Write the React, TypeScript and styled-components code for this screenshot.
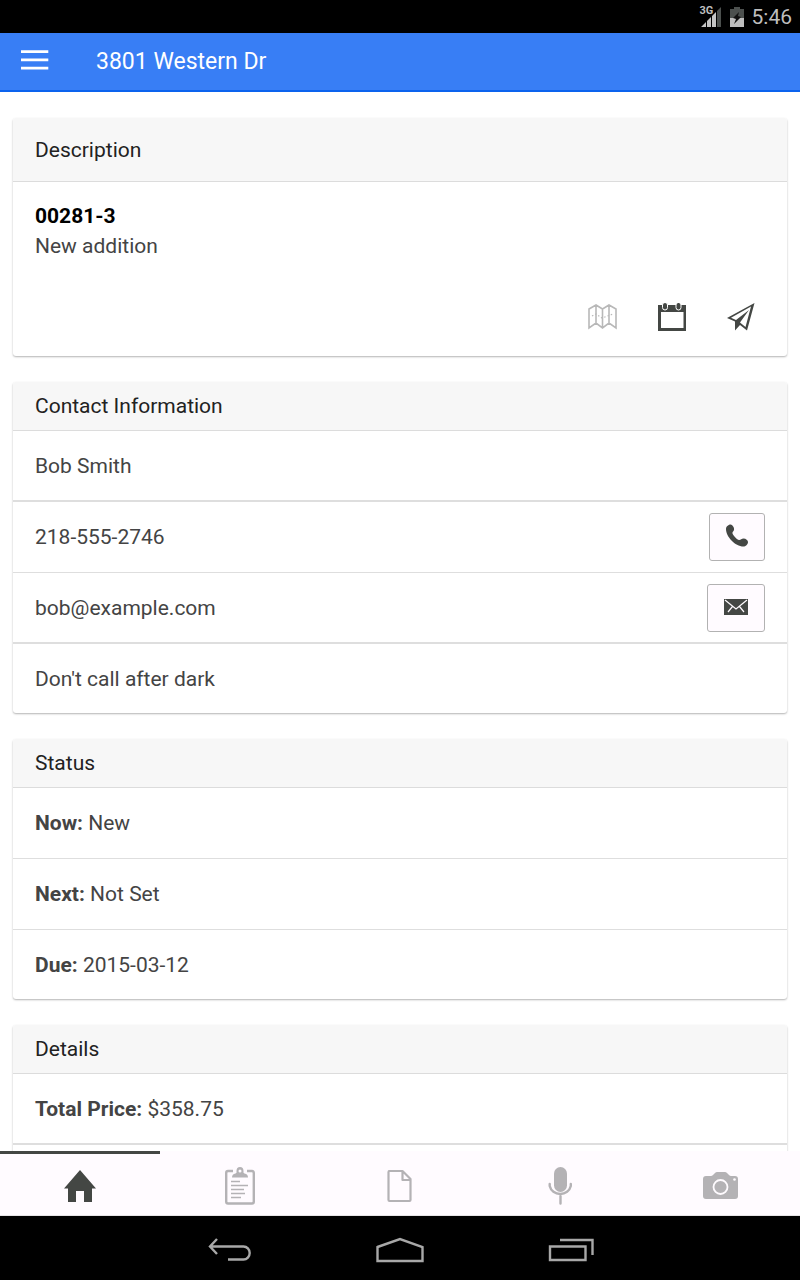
import React from "react";
import styled, { createGlobalStyle } from "styled-components";

const GlobalStyle = createGlobalStyle`
  * { box-sizing: border-box; }
  body { margin: 0; background: #fff; font-family: Roboto, "Noto Sans", sans-serif; }
`;

const Screen = styled.div`
  display: flex;
  flex-direction: column;
  height: 100vh;
  background: #fff;
  color: #444;
  font-size: 21px;
  line-height: 30px;
`;

const StatusBar = styled.div`
  display: flex;
  flex: none;
  align-items: center;
  justify-content: flex-end;
  gap: 8px;
  height: 33px;
  padding: 1px 8px 0;
  background: #000;
  color: #bebebe;
`;

const Signal = styled.span`
  position: relative;
  display: flex;
`;

const NetworkType = styled.span`
  position: absolute;
  top: -2px;
  left: -1px;
  font-size: 11px;
  font-weight: 700;
  line-height: 12px;
`;

const TitleBar = styled.header`
  display: flex;
  flex: none;
  align-items: center;
  gap: 46px;
  height: 59px;
  padding: 1px 20px 0;
  border-bottom: 2px solid #0c63ee;
  background: #387ef5;
  color: #fff;
`;

const PlainButton = styled.button<{ $muted?: boolean }>`
  display: flex;
  padding: 0;
  border: 0;
  background: none;
  color: ${(p) => (p.$muted ? "#b8b8b8" : "#444744")};
  cursor: pointer;
`;

const MenuButton = styled(PlainButton)`
  color: #fff;
`;

const Title = styled.h1`
  margin: 0;
  font-size: 23px;
  font-weight: 400;
`;

const Content = styled.main`
  display: flex;
  flex: 1;
  flex-direction: column;
  gap: 26px;
  min-height: 0;
  padding: 26px 13px;
  overflow-y: auto;
  scrollbar-width: none;
`;

const Card = styled.section`
  flex: none;
  overflow: hidden;
  border-radius: 3px;
  background: #fff;
  box-shadow: 0 1px 2px rgba(0, 0, 0, 0.3);
`;

const CardTitle = styled.h2<{ $tall?: boolean }>`
  margin: 0;
  padding: ${(p) => (p.$tall ? "17px 22px 16px" : "9px 22px")};
  border-bottom: 1px solid #dcdcdc;
  background: #f7f7f7;
  color: #222;
  font-size: 21px;
  font-weight: 400;
`;

const Summary = styled.div`
  padding: 19px 22px 0;
`;

const JobNumber = styled.strong`
  display: block;
  color: #000;
`;

const Actions = styled.div`
  display: flex;
  align-items: center;
  justify-content: flex-end;
  gap: 41px;
  padding: 42px 10px 25px;
`;

const Rows = styled.ul`
  margin: 0;
  padding: 0;
  list-style: none;
`;

const Row = styled.li<{ $strong?: boolean }>`
  display: flex;
  align-items: center;
  justify-content: space-between;
  min-height: 71px;
  padding: 0 22px;
  border-bottom: ${(p) => (p.$strong ? 2 : 1)}px solid #dedede;

  &:last-child {
    min-height: 69px;
    border-bottom: 0;
  }
`;

const ContactButton = styled.button`
  display: flex;
  align-items: center;
  padding: 10px 16px 12px;
  border: 1px solid #b2b2b2;
  border-radius: 3px;
  background: #fffbff;
  color: #444744;
  cursor: pointer;
`;

const TabBar = styled.nav`
  display: flex;
  flex: none;
  height: 65px;
  border-bottom: 1px solid #e6e4e6;
  background: #fffbff;
`;

const Tab = styled.a<{ $active?: boolean }>`
  display: flex;
  flex: 1;
  align-items: center;
  justify-content: center;
  padding-top: 3px;
  border-top: 3px solid ${(p) => (p.$active ? "#444744" : "transparent")};
  color: ${(p) => (p.$active ? "#444744" : "#b4b2b5")};
`;

const SystemBar = styled.div`
  display: flex;
  flex: none;
  align-items: center;
  justify-content: center;
  gap: 124px;
  height: 64px;
  padding: 4px 0 0 2px;
  background: #000;
`;

const SystemButton = styled(PlainButton)`
  color: #a8a8a8;
`;

const SignalIcon = () => (
  <svg width="21" height="20" viewBox="0 0 21 20" aria-hidden="true">
    <path d="M0 20 5 15V20ZM6 14 10 10V20H6ZM11 9 15 5V20H11Z" fill="#c4c4c4" />
    <path d="M16 4 20 0V20H16Z" fill="#4c504e" />
  </svg>
);

const BatteryIcon = () => (
  <svg width="14" height="20" viewBox="0 0 14 20" aria-hidden="true">
    <path d="M4 0H10V2H14V11H0V2H4Z" fill="#4c504e" />
    <path d="M0 11H14V20H0Z" fill="#bebebe" />
    <path d="M9 5 3 11 6 12 4 17 11 10 8 9Z" fill="#111" />
  </svg>
);

const MenuIcon = () => (
  <svg width="30" height="24" viewBox="0 0 30 24" fill="currentColor" aria-hidden="true">
    <path d="M1 .3H28.300V3H1ZM1 8.500H28.300V11.200H1ZM1 16.800H28.300V19.500H1Z" />
  </svg>
);

const MapIcon = () => (
  <svg width="29" height="28" viewBox="0 0 29 28" fill="none" stroke="currentColor" aria-hidden="true">
    <path d="M1 6 8 2 14.500 6 21 2 28 6V25L21 20 14.500 25 8 20 1 25ZM8 2V20M14.500 6V25M21 2V20" strokeWidth="1.600" />
    <path d="M4 13 8 11 14 15 25 11" strokeWidth="1.200" strokeDasharray="1.500 2" />
  </svg>
);

const CalendarIcon = () => (
  <svg width="28" height="28" viewBox="0 0 28 28" aria-hidden="true">
    <path d="M0 2H28V28H0ZM3 9V25H25.500V9Z" fill="currentColor" fillRule="evenodd" />
    <rect x="4.500" y="-.5" width="5" height="7.500" rx="2.500" fill="currentColor" stroke="#fff" />
    <rect x="18" y="-.5" width="5" height="7.500" rx="2.500" fill="currentColor" stroke="#fff" />
  </svg>
);

const PlaneIcon = () => (
  <svg width="28" height="28" viewBox="0 0 28 28" aria-hidden="true">
    <path
      d="M27.500 0 0 15 8 18.500V27.500L13 22 20 27.500ZM24 3.500 18.500 24 13 19.500 22 7 9 17 4 14.800Z"
      fill="currentColor"
      fillRule="evenodd"
    />
  </svg>
);

const PhoneIcon = () => (
  <svg width="22" height="24" viewBox="1 0 22 24" fill="currentColor" aria-hidden="true">
    <path d="M1 5C1 2 4 .5 5.500 .5 8 1 9.500 4 9 6 8.500 7.500 7 8 7.500 9.500 8.500 12 12 15.500 14 16 15.500 16.300 16.500 14.500 18.500 14.500 21 14.500 23 16.500 23 18 23 20.500 20.500 22.500 18.500 22.500 10 22.500 1 12.500 1 5Z" />
  </svg>
);

const MailIcon = () => (
  <svg width="24" height="24" viewBox="0 0 24 24" aria-hidden="true">
    <path d="M0 4H24V20H0Z" fill="currentColor" />
    <path d="M1 5 12 14 23 5M4 17 8.500 11.500M20 17 15.500 11.500" fill="none" stroke="#fffbff" strokeWidth="1.200" />
  </svg>
);

const HomeIcon = () => (
  <svg width="32" height="38" viewBox="0 0 32 38" fill="currentColor" aria-hidden="true">
    <path d="M16 3 32 21.500H28V35H20V24H12V35H4V21.500H0Z" />
  </svg>
);

const ClipboardIcon = () => (
  <svg width="30" height="38" viewBox="0 0 30 38" aria-hidden="true">
    <path
      d="M8 4H3Q1.200 4 1.200 6V34.500Q1.200 36.500 3 36.500H27Q28.800 36.500 28.800 34.500V6Q28.800 4 27 4H22"
      fill="none"
      stroke="currentColor"
      strokeWidth="2.400"
    />
    <path
      d="M7 10.500Q7 7 10.500 6.500 12 6 11.500 4 11.500 0 15 0T18.500 4Q18 6 19.500 6.500 23 7 23 10.500ZM15 2.500A1.500 1.500 0 1 0 15 5.500 1.500 1.500 0 0 0 15 2.500Z"
      fill="currentColor"
      fillRule="evenodd"
    />
    <path d="M6 14.500H15M6 18.500H23M6 22.500H19M6 26.500H20M6 30.500H16" stroke="currentColor" strokeWidth="1.400" />
  </svg>
);

const DocumentIcon = () => (
  <svg width="26" height="38" viewBox="0 0 26 38" fill="none" stroke="currentColor" strokeWidth="2.200" strokeLinejoin="round" aria-hidden="true">
    <path d="M2 4H15.500L23.500 12V33Q23.500 34 22.500 34H2.500Q1.500 34 1.500 33V5Q1.500 4 2.500 4ZM15.500 4V13H23.500" />
  </svg>
);

const MicIcon = () => (
  <svg width="24" height="38" viewBox="0 0 24 38" aria-hidden="true">
    <rect x="6" width="13" height="25" rx="6.500" fill="currentColor" />
    <path
      d="M1.700 17V19A10.800 10.200 0 0 0 22.800 19V17M12.500 29V36.500"
      fill="none"
      stroke="currentColor"
      strokeWidth="2.400"
      strokeLinecap="round"
    />
  </svg>
);

const CameraIcon = () => (
  <svg width="35" height="38" viewBox="0 0 35 38" aria-hidden="true">
    <path d="M3 9H8Q9 9 10 8L12 6Q13 5 14 5H22Q23 5 24 6L26 8Q27 9 28 9H32Q35 9 35 12V29Q35 32 32 32H3Q0 32 0 29V12Q0 9 3 9Z" fill="currentColor" />
    <circle cx="17.500" cy="20" r="7" fill="none" stroke="#fffbff" strokeWidth="1.800" />
    <circle cx="31.500" cy="12.500" r="1.300" fill="#fffbff" />
  </svg>
);

const BackIcon = () => (
  <svg width="44" height="24" viewBox="0 0 44 24" fill="none" stroke="currentColor" strokeWidth="2.400" aria-hidden="true">
    <path d="M9 1 2 8.500 9 16M2 8.500H35.500A6 6.300 0 0 1 35.500 21.500H20" />
  </svg>
);

const LauncherIcon = () => (
  <svg width="48" height="26" viewBox="0 0 48 26" fill="none" stroke="currentColor" strokeWidth="2.400" aria-hidden="true">
    <path d="M1.500 10 24 2 46.500 10V24H1.500Z" />
  </svg>
);

const RecentsIcon = () => (
  <svg width="46" height="24" viewBox="0 0 46 24" fill="none" stroke="currentColor" strokeWidth="2.400" aria-hidden="true">
    <path d="M2 8.500H37.500V22H2ZM12 2H44.500V17" />
  </svg>
);

const statusRows = [
  { label: "Now:", value: "New" },
  { label: "Next:", value: "Not Set" },
  { label: "Due:", value: "2015-03-12" },
];

const tabs = [
  { id: "home", label: "Home", icon: <HomeIcon /> },
  { id: "notes", label: "Notes", icon: <ClipboardIcon /> },
  { id: "documents", label: "Documents", icon: <DocumentIcon /> },
  { id: "audio", label: "Audio", icon: <MicIcon /> },
  { id: "photos", label: "Photos", icon: <CameraIcon /> },
];

export default function App() {
  return (
    <Screen>
      <GlobalStyle />
      <StatusBar>
        <Signal>
          <SignalIcon />
          <NetworkType>3G</NetworkType>
        </Signal>
        <BatteryIcon />
        <time>5:46</time>
      </StatusBar>
      <TitleBar>
        <MenuButton aria-label="Menu">
          <MenuIcon />
        </MenuButton>
        <Title>3801 Western Dr</Title>
      </TitleBar>
      <Content>
        <Card>
          <CardTitle $tall>Description</CardTitle>
          <Summary>
            <JobNumber>00281-3</JobNumber>
            New addition
            <Actions>
              <PlainButton $muted aria-label="Map">
                <MapIcon />
              </PlainButton>
              <PlainButton aria-label="Calendar">
                <CalendarIcon />
              </PlainButton>
              <PlainButton aria-label="Send">
                <PlaneIcon />
              </PlainButton>
            </Actions>
          </Summary>
        </Card>
        <Card>
          <CardTitle>Contact Information</CardTitle>
          <Rows>
            <Row $strong>Bob Smith</Row>
            <Row>
              218-555-2746
              <ContactButton aria-label="Call">
                <PhoneIcon />
              </ContactButton>
            </Row>
            <Row $strong>
              bob@example.com
              <ContactButton aria-label="Email">
                <MailIcon />
              </ContactButton>
            </Row>
            <Row>Don't call after dark</Row>
          </Rows>
        </Card>
        <Card>
          <CardTitle>Status</CardTitle>
          <Rows>
            {statusRows.map((row) => (
              <Row key={row.label}>
                <span>
                  <strong>{row.label}</strong> {row.value}
                </span>
              </Row>
            ))}
          </Rows>
        </Card>
        <Card>
          <CardTitle>Details</CardTitle>
          <Rows>
            <Row $strong>
              <span>
                <strong>Total Price:</strong> $358.75
              </span>
            </Row>
            <Row />
          </Rows>
        </Card>
      </Content>
      <TabBar aria-label="Sections">
        {tabs.map((tab) => (
          <Tab key={tab.id} href={`#${tab.id}`} aria-label={tab.label} $active={tab.id === "home"}>
            {tab.icon}
          </Tab>
        ))}
      </TabBar>
      <SystemBar>
        <SystemButton aria-label="Back">
          <BackIcon />
        </SystemButton>
        <SystemButton aria-label="Launcher">
          <LauncherIcon />
        </SystemButton>
        <SystemButton aria-label="Recent apps">
          <RecentsIcon />
        </SystemButton>
      </SystemBar>
    </Screen>
  );
}
